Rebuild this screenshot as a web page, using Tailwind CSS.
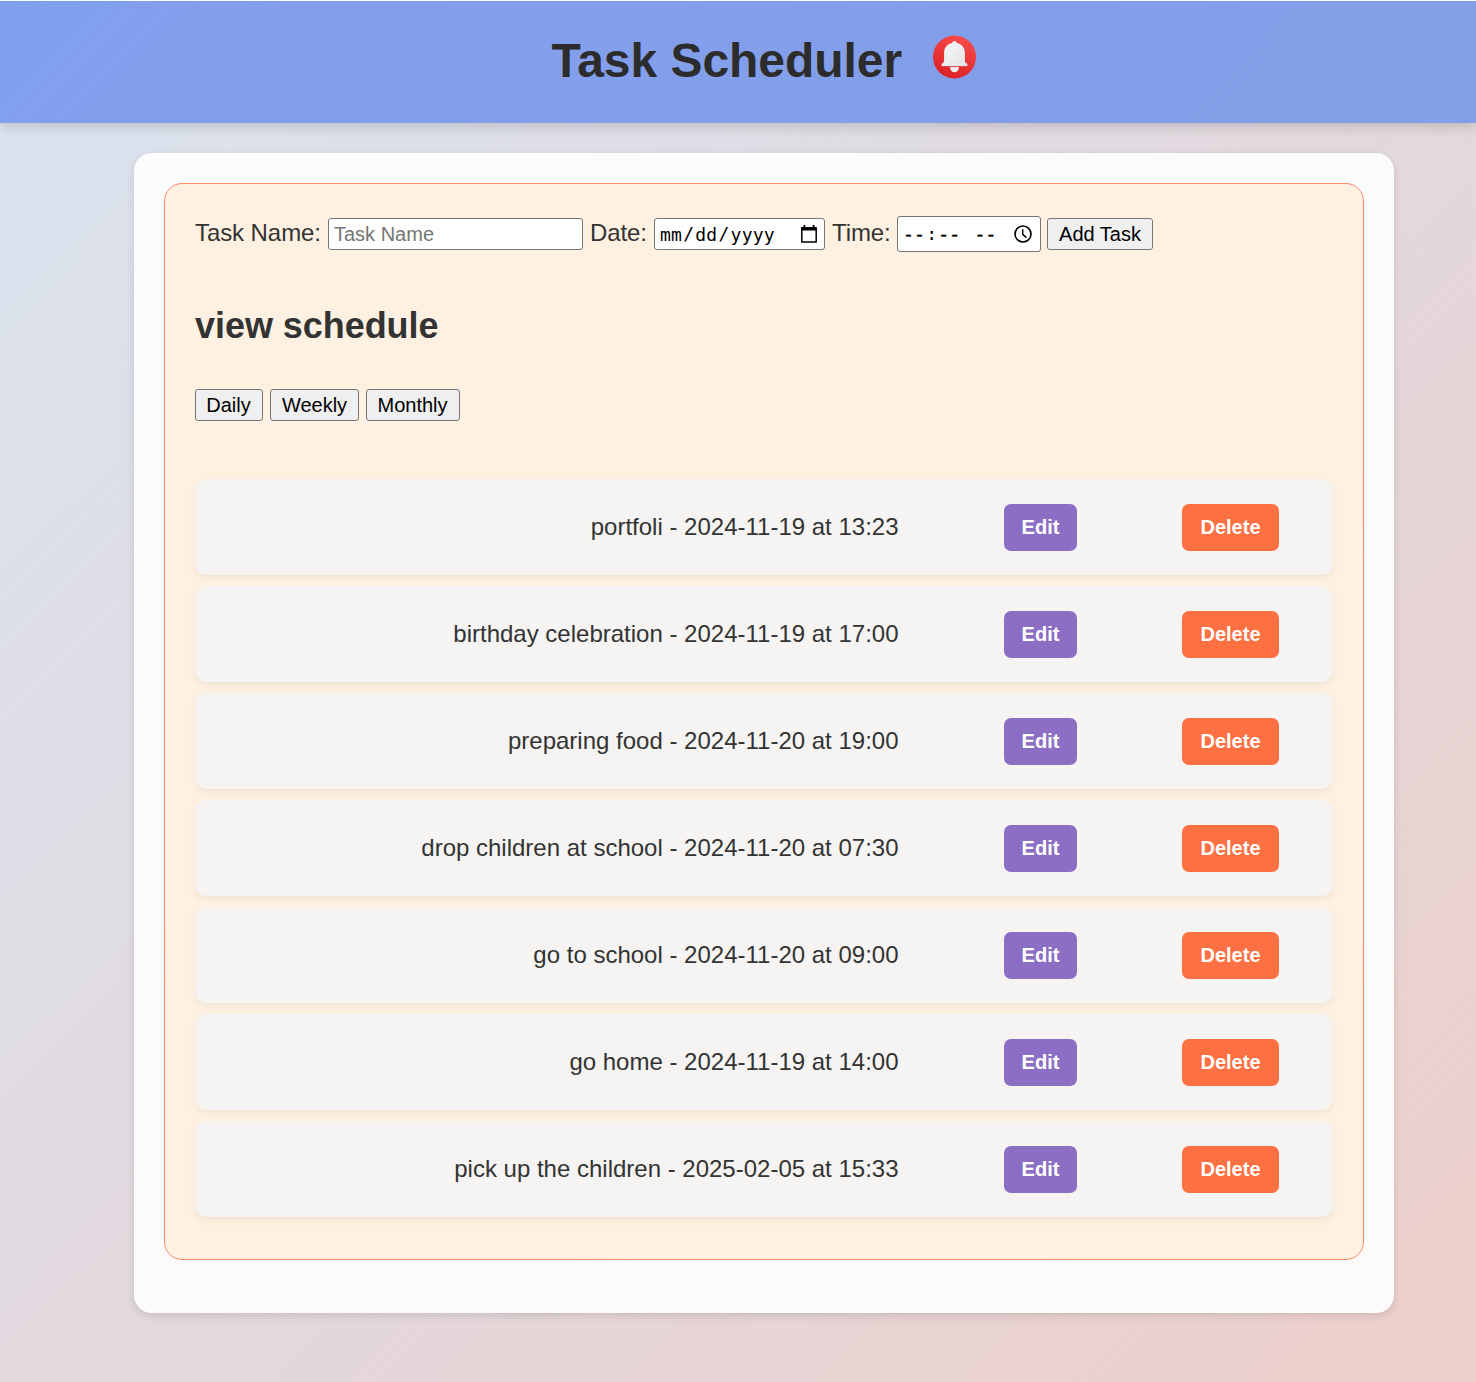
<!DOCTYPE html>
<html lang="en">
<head>
<meta charset="utf-8">
<title>Task Scheduler</title>
<script src="https://cdn.jsdelivr.net/npm/@tailwindcss/browser@4"></script>
</head>
<body class="h-[1382px] overflow-hidden bg-[linear-gradient(135deg,#dae4f0_0%,#e2d9de_50%,#edcfca_100%)] font-['Liberation_Sans',Arial,sans-serif] text-2xl text-[#333]">
<header class="flex h-[123px] items-start justify-center border-t border-white bg-[linear-gradient(135deg,#80a0ed,#839fec_20%,#849ee7)] pl-[52px] pt-8 shadow-[0_4px_12px_rgba(0,0,0,0.15)]">
  <h1 class="w-[350px] text-[48px] leading-[56px] font-bold tracking-[-0.05px] whitespace-nowrap text-[#2c2c2c]">Task Scheduler</h1>
  <svg class="mt-[2px] ml-[31px] size-11 shrink-0" viewBox="0 0 44 44">
    <defs>
      <linearGradient id="red" x1=".7" y1="0" x2=".3" y2="1"><stop stop-color="#f84b4b"/><stop offset="1" stop-color="#da2024"/></linearGradient>
      <linearGradient id="bell" x1="0" y1="0" x2="1" y2="1"><stop stop-color="#f8f8f8"/><stop offset="1" stop-color="#e3e3e3"/></linearGradient>
    </defs>
    <circle cx="21.5" cy="22" r="21.5" fill="url(#red)"/>
    <path d="M17 32h9a4.500 5.300 0 0 1-9 0z" fill="#f4eded"/>
    <path d="M21.500 6c1.400 0 2.200.8 2.400 2.100 5 1.100 8 4.800 8 9.700v8.200c0 .8.300 1.300 1 1.700.9.500 1.600 1.100 1.600 2.100s-.6 1.500-1.500 1.500H10c-.9 0-1.500-.5-1.500-1.500s.7-1.600 1.600-2.100c.7-.4 1-.9 1-1.700v-8.200c0-4.900 3-8.600 8-9.700.2-1.300 1-2.100 2.400-2.100z" fill="url(#bell)"/>
    <path d="M9.500 31.700h24" stroke="#b91c20" stroke-opacity=".4" stroke-width=".7"/>
  </svg>
</header>

<main class="mt-[30px] ml-[134px] h-[1160px] w-[1260px] rounded-[18px] bg-white/90 p-[30px] shadow-[0_3px_9px_rgba(0,0,0,0.12)]">
  <section class="h-[1077px] rounded-[18px] border border-[#ff8c69] bg-[#fff1e1] px-[30px] pt-8">
    <form class="flex h-9 items-center text-xl text-black">
      <label class="w-[133px] -translate-y-px text-2xl tracking-[-0.08px] whitespace-nowrap text-[#333]">Task Name:</label>
      <input class="h-8 w-[255px] rounded-[3px] border border-[#767676] bg-white px-[5px] placeholder:text-[#757575]" placeholder="Task Name">
      <label class="ml-[7px] w-[64px] -translate-y-px text-2xl tracking-[-0.1px] whitespace-nowrap text-[#333]">Date:</label>
      <div class="flex h-8 w-[171px] items-center rounded-[3px] border border-[#767676] bg-white pr-[6px] pl-1 font-['DejaVu_Sans_Mono',monospace] text-lg tracking-[0.25px]">
        <span class="px-px pt-px">mm</span><span>/</span><span class="px-px pt-px">dd</span><span>/</span><span class="px-px pt-px">yyyy</span>
        <svg class="ml-auto h-5 w-[18px]" viewBox="0 0 18 20"><path d="M1.800 4h14.400v14H1.800z" fill="none" stroke="#000" stroke-width="1.500" stroke-linejoin="round"/><path d="M1.500 3h15v3.500h-15zM3.500 1h1.800v3H3.500zM12.700 1h1.800v3h-1.800z"/></svg>
      </div>
      <label class="ml-[7px] w-[65px] -translate-y-px text-2xl tracking-[-0.1px] whitespace-nowrap text-[#333]">Time:</label>
      <div class="flex h-9 w-[144px] items-center rounded-[3px] border border-[#767676] bg-white pr-[7.5px] pl-1 font-['DejaVu_Sans_Mono',monospace] text-lg tracking-[0.25px]">
        <span class="px-px [-webkit-text-stroke:0.5px_black]">--</span><span>:</span><span class="px-px [-webkit-text-stroke:0.5px_black]">--</span><span class="ml-3 px-px [-webkit-text-stroke:0.5px_black]">--</span>
        <svg class="ml-auto size-5" viewBox="0 0 20 20" fill="none" stroke="#000" stroke-width="1.600"><circle cx="10" cy="10" r="8"/><path d="M9.700 5.200v5.200l3.700 3.200" stroke-width="1.400"/></svg>
      </div>
      <button type="button" class="ml-[6px] h-8 w-[106px] rounded-[3px] border border-[#767676] bg-[#efefef]">Add Task</button>
    </form>

    <h2 class="mt-[53px] text-[36px] leading-[42px] font-bold tracking-[-0.05px]">view schedule</h2>

    <div class="mt-[42px] flex gap-[7px] text-xl text-black">
      <button class="h-8 w-[68px] rounded-[3px] border border-[#767676] bg-[#efefef] pr-px">Daily</button>
      <button class="h-8 w-[89px] rounded-[3px] border border-[#767676] bg-[#efefef]">Weekly</button>
      <button class="h-8 w-[94px] rounded-[3px] border border-[#767676] bg-[#efefef] pr-px">Monthly</button>
    </div>

    <ul id="tasks" class="mt-[58px] flex flex-col gap-[11px]"></ul>
  </section>
</main>

<template id="row">
  <li class="flex h-24 items-center rounded-xl bg-[#f5f4f2] shadow-[0_3px_7px_rgba(0,0,0,0.06)]">
    <span class="w-[704px] pr-[0.5px] text-right whitespace-nowrap"></span>
    <button class="ml-[105px] h-[47px] w-[73px] rounded-[7px] bg-[#8c6fc4] text-xl font-bold text-white">Edit</button>
    <button class="ml-[105px] h-[47px] w-[97px] rounded-[7px] bg-[#ff7043] text-xl font-bold text-white">Delete</button>
  </li>
</template>
<script>
const tasks = [
  'portfoli - 2024-11-19 at 13:23',
  'birthday celebration - 2024-11-19 at 17:00',
  'preparing food - 2024-11-20 at 19:00',
  'drop children at school - 2024-11-20 at 07:30',
  'go to school - 2024-11-20 at 09:00',
  'go home - 2024-11-19 at 14:00',
  'pick up the children - 2025-02-05 at 15:33'
];
const list = document.getElementById('tasks');
const row = document.getElementById('row');
for (const task of tasks) {
  const item = row.content.cloneNode(true);
  item.querySelector('span').textContent = task;
  list.append(item);
}
</script>
</body>
</html>
